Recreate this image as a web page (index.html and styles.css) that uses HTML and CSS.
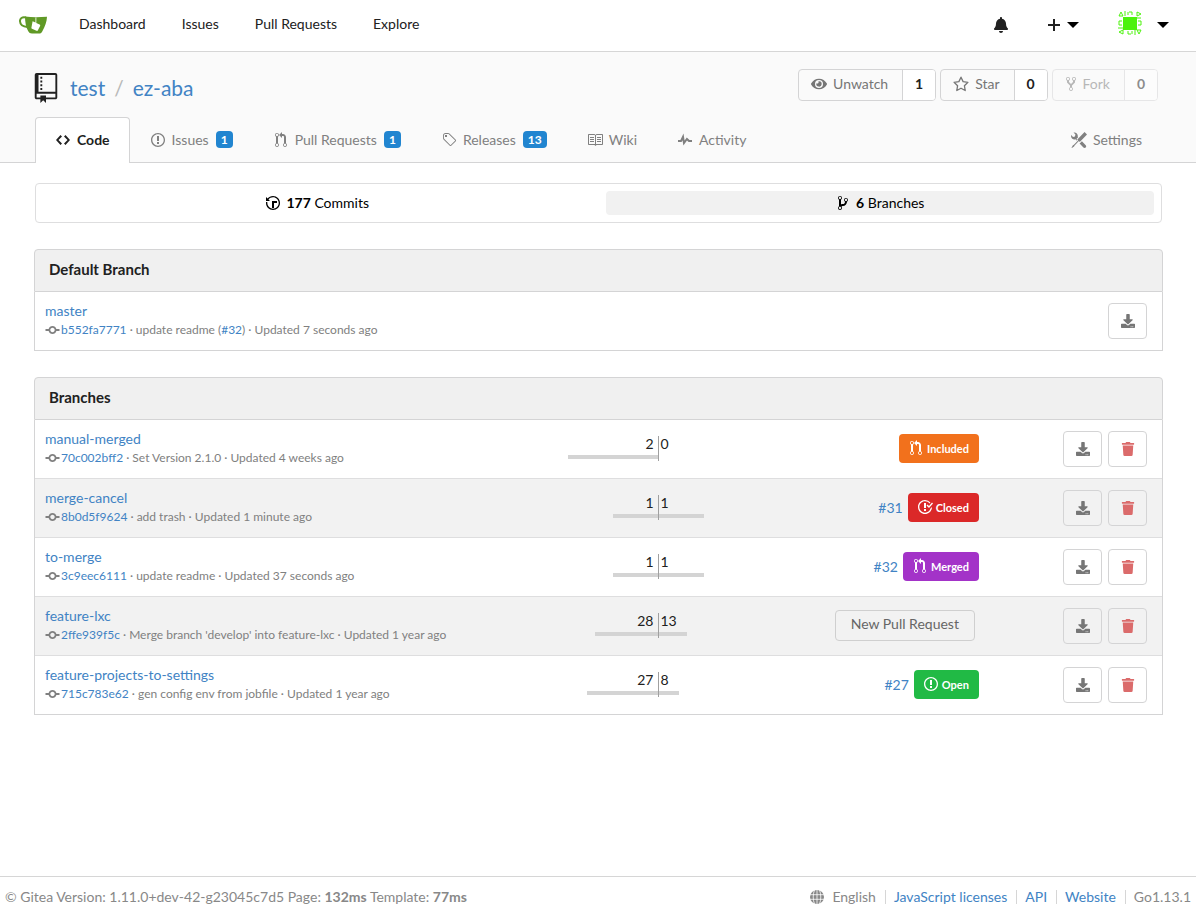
FILE: index.html
```html
<!DOCTYPE html>
<html lang="en">
<head>
  <meta charset="UTF-8">
  <title>test/ez-aba: Branches</title>
  <link rel="stylesheet" href="styles.css">
</head>
<body>

<!-- icon sprite -->
<svg class="sprite" aria-hidden="true">
  <symbol id="i-repo" viewBox="0 0 12 16"><path d="M4 9H3V8h1v1zm0-3H3v1h1V6zm0-2H3v1h1V4zm0-2H3v1h1V2zm8-1v12c0 .55-.45 1-1 1H6v2l-1.5-1.5L3 16v-2H1c-.55 0-1-.45-1-1V1c0-.55.45-1 1-1h10c.55 0 1 .45 1 1zm-1 10H1v2h2v-1h3v1h5v-2zm0-10H2v9h9V1z"/></symbol>
  <symbol id="i-code" viewBox="0 0 14 16"><path d="M9.5 3L8 4.5 11.5 8 8 11.5 9.5 13 14 8 9.5 3zm-5 0L0 8l4.5 5L6 11.5 2.5 8 6 4.5 4.5 3z"/></symbol>
  <symbol id="i-issue" viewBox="0 0 14 16"><path d="M7 2.3c3.14 0 5.7 2.56 5.7 5.7s-2.56 5.7-5.7 5.7A5.71 5.71 0 0 1 1.3 8c0-3.14 2.56-5.7 5.7-5.7zM7 1C3.14 1 0 4.14 0 8s3.14 7 7 7 7-3.14 7-7-3.14-7-7-7zm1 3H6v5h2V4zm0 6H6v2h2v-2z"/></symbol>
  <symbol id="i-closed" viewBox="0 0 16 16"><path d="M7 10h2v2H7v-2zm2-6H7v5h2V4zm1.5 1.5l-1 1L12 9l4-4.5-1-1L12 7l-1.5-1.5zM8 13.7A5.71 5.71 0 0 1 2.3 8c0-3.14 2.56-5.7 5.7-5.7 1.83 0 3.45.88 4.5 2.2l.92-.92A6.947 6.947 0 0 0 8 1C4.14 1 1 4.14 1 8s3.14 7 7 7 7-3.14 7-7l-1.52 1.52c-.66 2.41-2.86 4.19-5.48 4.19v-.01z"/></symbol>
  <symbol id="i-pull" viewBox="0 0 12 16"><path d="M11 11.28V5c-.03-.78-.34-1.47-.94-2.06C9.46 2.35 8.78 2.03 8 2H7V0L4 3l3 3V4h1c.27.02.48.11.69.31.21.2.3.42.31.69v6.28A1.993 1.993 0 0 0 10 15a1.993 1.993 0 0 0 1-3.72zm-1 2.92c-.66 0-1.2-.55-1.2-1.2 0-.65.55-1.2 1.2-1.2.65 0 1.2.55 1.2 1.2 0 .65-.55 1.2-1.2 1.2zM4 3c0-1.11-.89-2-2-2a1.993 1.993 0 0 0-1 3.72v6.56A1.993 1.993 0 0 0 2 15a1.993 1.993 0 0 0 1-3.72V4.72c.59-.34 1-.98 1-1.72zm-.8 10c0 .66-.55 1.2-1.2 1.2-.65 0-1.2-.55-1.2-1.2 0-.65.55-1.2 1.2-1.2.65 0 1.2.55 1.2 1.2zM2 4.2C1.34 4.2.8 3.65.8 3c0-.65.55-1.2 1.2-1.2.65 0 1.2.55 1.2 1.2 0 .65-.55 1.2-1.2 1.2z"/></symbol>
  <symbol id="i-tag" viewBox="0 0 14 16"><path d="M7.73 1.73C7.26 1.26 6.62 1 5.96 1H3.5C2.13 1 1 2.13 1 3.5v2.47c0 .66.27 1.3.73 1.77l6.06 6.06c.39.39 1.02.39 1.41 0l4.59-4.59a.996.996 0 0 0 0-1.41L7.73 1.73zM2.38 7.09c-.31-.3-.47-.7-.47-1.13V3.5c0-.88.72-1.59 1.59-1.59h2.47c.42 0 .83.16 1.13.47l6.14 6.13-4.73 4.73-6.13-6.15zM3.01 3h2v2H3V3h.01z"/></symbol>
  <symbol id="i-book" viewBox="0 0 16 16"><path d="M3 5h4v1H3V5zm0 3h4V7H3v1zm0 2h4V9H3v1zm11-5h-4v1h4V5zm0 2h-4v1h4V7zm0 2h-4v1h4V9zm2-6v9c0 .55-.45 1-1 1H9.5l-1 1-1-1H2c-.55 0-1-.45-1-1V3c0-.55.45-1 1-1h5.5l1 1 1-1H15c.55 0 1 .45 1 1zm-8 .5L7.5 3H2v9h6V3.5zm7-.5H9.5l-.5.5V12h6V3z"/></symbol>
  <symbol id="i-pulse" viewBox="0 0 14 16"><path d="M11.5 8L8.8 5.4 6.6 8.5 5.5 1.6 2.38 8H0v2h3.6l.9-1.8.9 5.4L9 8.5l1.6 1.5H14V8h-2.5z"/></symbol>
  <symbol id="i-tools" viewBox="0 0 16 16"><path d="M4.48 7.27c.26.26 1.28 1.33 1.28 1.33l.56-.58-.88-.91 1.69-1.8s-.76-.74-.43-.45c.32-1.19.03-2.51-.87-3.44C4.93.5 3.66.2 2.52.51l1.93 2-.51 1.96-1.89.52-1.93-1.99C-.19 4.17.1 5.48 1 6.4c.94.98 2.29 1.26 3.48.87zm6.44 1.94l-2.33 2.3 3.84 3.98c.31.33.73.49 1.14.49.41 0 .82-.16 1.14-.49.63-.65.63-1.7 0-2.35l-3.79-3.93zM16 2.53L13.55 0 6.33 7.46l.88.91-4.31 4.46-.99.53-1.39 2.27.35.37 2.2-1.44.51-1.02L7.9 9.08l.88.91L16 2.53z"/></symbol>
  <symbol id="i-history" viewBox="0 0 14 16"><path d="M8 13H6V6h5v2H8v5zM7 1C4.81 1 2.87 2.02 1.59 3.59L0 2v4h4L2.5 4.5C3.55 3.17 5.17 2.3 7 2.3c3.14 0 5.7 2.56 5.7 5.7s-2.56 5.7-5.7 5.7A5.71 5.71 0 0 1 1.3 8c0-.34.03-.67.09-1H.08C.03 7.33 0 7.66 0 8c0 3.86 3.14 7 7 7s7-3.14 7-7-3.14-7-7-7z"/></symbol>
  <symbol id="i-branch" viewBox="0 0 10 16"><path d="M10 5c0-1.11-.89-2-2-2a1.993 1.993 0 0 0-1 3.72v.3c-.02.52-.23.98-.63 1.38-.4.4-.86.61-1.38.63-.83.02-1.48.16-2 .45V4.72a1.993 1.993 0 0 0-1-3.72C.88 1 0 1.89 0 3a2 2 0 0 0 1 1.72v6.56c-.59.35-1 .99-1 1.72 0 1.11.89 2 2 2 1.11 0 2-.89 2-2 0-.53-.2-1-.53-1.36.09-.06.48-.41.59-.47.25-.11.56-.17.94-.17 1.05-.05 1.95-.45 2.75-1.25S8.95 7.77 9 6.73h-.02C9.59 6.37 10 5.73 10 5zM2 1.8c.66 0 1.2.55 1.2 1.2 0 .65-.55 1.2-1.2 1.2C1.35 4.2.8 3.65.8 3c0-.65.55-1.2 1.2-1.2zm0 12.41c-.66 0-1.2-.55-1.2-1.2 0-.65.55-1.2 1.2-1.2.65 0 1.2.55 1.2 1.2 0 .65-.55 1.2-1.2 1.2zm6-8c-.66 0-1.2-.55-1.2-1.2 0-.65.55-1.2 1.2-1.2.65 0 1.2.55 1.2 1.2 0 .65-.55 1.2-1.2 1.2z"/></symbol>
  <symbol id="i-commit" viewBox="0 0 14 16"><path d="M10.86 7c-.45-1.72-2-3-3.86-3-1.86 0-3.41 1.28-3.86 3H0v2h3.14c.45 1.72 2 3 3.86 3 1.86 0 3.41-1.28 3.86-3H14V7h-3.14zM7 10.2c-1.22 0-2.2-.98-2.2-2.2 0-1.22.98-2.2 2.2-2.2 1.22 0 2.2.98 2.2 2.2 0 1.22-.98 2.2-2.2 2.2z"/></symbol>
  <symbol id="i-fork" viewBox="0 0 10 16"><path d="M8 1a1.993 1.993 0 0 0-1 3.72V6L5 8 3 6V4.72A1.993 1.993 0 0 0 2 1a1.993 1.993 0 0 0-1 3.72V6.5l3 3v1.78A1.993 1.993 0 0 0 5 15a1.993 1.993 0 0 0 1-3.72V9.5l3-3V4.72A1.993 1.993 0 0 0 8 1zM2 4.2C1.34 4.2.8 3.65.8 3c0-.65.55-1.2 1.2-1.2.65 0 1.2.55 1.2 1.2 0 .65-.55 1.2-1.2 1.2zm3 10c-.66 0-1.2-.55-1.2-1.2 0-.65.55-1.2 1.2-1.2.65 0 1.2.55 1.2 1.2 0 .65-.55 1.2-1.2 1.2zm3-10c-.66 0-1.2-.55-1.2-1.2 0-.65.55-1.2 1.2-1.2.65 0 1.2.55 1.2 1.2 0 .65-.55 1.2-1.2 1.2z"/></symbol>
  <symbol id="i-bell" viewBox="0 0 448 512"><path d="M224 512c35.32 0 63.97-28.65 63.97-64H160.03c0 35.35 28.65 64 63.97 64zm215.39-149.71c-19.32-20.76-55.47-51.99-55.47-154.29 0-77.7-54.48-139.9-127.94-155.16V32c0-17.67-14.32-32-31.98-32s-31.98 14.33-31.98 32v20.84C118.56 68.1 64.08 130.3 64.08 208c0 102.3-36.15 133.53-55.47 154.29-6 6.45-8.66 14.16-8.61 21.71.11 16.4 12.98 32 32.1 32h383.8c19.12 0 32-15.6 32.1-32 .05-7.55-2.61-15.27-8.61-21.71z"/></symbol>
  <symbol id="i-plus" viewBox="0 0 12 16"><path d="M12 9H7v5H5V9H0V7h5V2h2v5h5z"/></symbol>
  <symbol id="i-caret" viewBox="0 0 12 6"><path d="M0 0h12L6 6z"/></symbol>
  <symbol id="i-eye" viewBox="0 0 576 512"><path d="M572.52 241.4C518.29 135.59 410.93 64 288 64S57.68 135.64 3.48 241.41a32.35 32.35 0 0 0 0 29.19C57.71 376.41 165.07 448 288 448s230.32-71.64 284.52-177.41a32.35 32.35 0 0 0 0-29.19zM288 400a144 144 0 1 1 144-144 143.93 143.93 0 0 1-144 144zm0-240a95.31 95.31 0 0 0-25.31 3.79 47.85 47.85 0 0 1-66.9 66.9A95.78 95.78 0 1 0 288 160z"/></symbol>
  <symbol id="i-star" viewBox="0 0 16 16"><path d="M8 1.2l2.1 4.4 4.8.7-3.5 3.4.8 4.8L8 12.2l-4.2 2.3.8-4.8L1.1 6.3l4.8-.7z" fill="none" stroke="currentColor" stroke-width="1.3" stroke-linejoin="round"/></symbol>
  <symbol id="i-trash" viewBox="0 0 448 512"><path d="M432 32H312l-9.4-18.7A24 24 0 0 0 281.1 0H166.8a23.72 23.72 0 0 0-21.4 13.3L136 32H16A16 16 0 0 0 0 48v32a16 16 0 0 0 16 16h416a16 16 0 0 0 16-16V48a16 16 0 0 0-16-16zM53.2 467a48 48 0 0 0 47.9 45h245.8a48 48 0 0 0 47.9-45L416 128H32z"/></symbol>
  <symbol id="i-download" viewBox="0 0 512 512"><path d="M216 0h80c13.3 0 24 10.7 24 24v168h87.7c17.8 0 26.7 21.5 14.1 34.1L269.7 378.3c-7.5 7.5-19.8 7.5-27.3 0L90.1 226.1c-12.6-12.6-3.7-34.1 14.1-34.1H192V24c0-13.3 10.7-24 24-24zm296 376v112c0 13.3-10.7 24-24 24H24c-13.3 0-24-10.7-24-24V376c0-13.3 10.7-24 24-24h146.7l49 49c20.1 20.1 52.5 20.1 72.6 0l49-49H488c13.3 0 24 10.7 24 24zm-124 88c0-11-9-20-20-20s-20 9-20 20 9 20 20 20 20-9 20-20zm64 0c0-11-9-20-20-20s-20 9-20 20 9 20 20 20 20-9 20-20z"/></symbol>
  <symbol id="i-globe" viewBox="0 0 14 14"><circle cx="7" cy="7" r="7"/><path d="M0 4.7h14M0 9.3h14M7 0v14M4.5 0C2.8 4 2.8 10 4.5 14M9.5 0c1.7 4 1.7 10 0 14" fill="none" stroke="#fff" stroke-width=".8"/></symbol>
</svg>

<nav class="navbar">
  <a href="#" class="logo" aria-label="Gitea">
    <svg width="28" height="18" viewBox="0 0 28 18">
      <path d="M7 1.5C3 .5.8 2.500 1 5.300c.2 3.700 3.500 5.500 7.500 5.700" fill="none" stroke="#609926" stroke-width="2"/>
      <path d="M6 .6c7 .7 14 .7 22 .1-.2 5-2 9.800-4.500 14.300-1 1.900-1.700 2.500-3.500 2.500h-7c-1.900 0-3-.8-3.900-2.500C7 11.500 6 6 6 .6z" fill="#609926"/>
      <path d="M13.600 5.300l2.900 1.300V1.500h.8v5.500l3.300 1.500c.6.3.8.8.5 1.400l-2.200 4.400c-.3.6-.8.8-1.400.5l-4.500-2.100c-.6-.3-.8-.8-.5-1.400z" fill="#fff"/>
    </svg>
  </a>
  <a href="#">Dashboard</a>
  <a href="#">Issues</a>
  <a href="#">Pull Requests</a>
  <a href="#">Explore</a>
  <div class="nav-right">
    <a href="#" aria-label="Notifications"><svg class="icon bell"><use href="#i-bell"/></svg></a>
    <button class="nav-menu" aria-label="Create"><svg class="icon plus"><use href="#i-plus"/></svg><svg class="caret"><use href="#i-caret"/></svg></button>
    <button class="nav-menu profile" aria-label="Profile">
      <svg class="avatar" viewBox="0 0 24 24" fill="none" stroke="#4cf20d">
        <path d="M5 6h14v13H5z" fill="#4cf20d" stroke="none"/>
        <path d="M1 5l2-4 2 4zM7 0v5M11 1h3v3M10 4V1M19 1l4 2-4 2zM23 7h-4M23 10v4h-3M20 10h3M23 19l-2 4-2-4zM17 19v5M13 23h-3v-3M14 20v3M5 23l-4-2 4-2zM0 17h5M1 14v-4h3M4 14H1"/>
      </svg>
      <svg class="caret"><use href="#i-caret"/></svg>
    </button>
  </div>
</nav>

<header class="repo-header">
  <div class="container">
    <div class="repo-top">
      <h1 class="repo-title">
        <svg class="repo-icon"><use href="#i-repo"/></svg>
        <a href="#">test</a><span class="divider">/</span><a href="#">ez-aba</a>
      </h1>
      <div class="repo-buttons">
        <div class="labeled"><button><svg class="icon"><use href="#i-eye"/></svg>Unwatch</button><a href="#">1</a></div>
        <div class="labeled"><button><svg class="icon"><use href="#i-star"/></svg>Star</button><a href="#">0</a></div>
        <div class="labeled disabled"><button disabled><svg class="icon narrow"><use href="#i-fork"/></svg>Fork</button><a href="#">0</a></div>
      </div>
    </div>
    <div class="tabs">
      <a href="#" class="tab active"><svg class="icon"><use href="#i-code"/></svg>Code</a>
      <a href="#" class="tab"><svg class="icon"><use href="#i-issue"/></svg>Issues <span class="count">1</span></a>
      <a href="#" class="tab"><svg class="icon"><use href="#i-pull"/></svg>Pull Requests <span class="count">1</span></a>
      <a href="#" class="tab"><svg class="icon"><use href="#i-tag"/></svg>Releases <span class="count">13</span></a>
      <a href="#" class="tab"><svg class="icon"><use href="#i-book"/></svg>Wiki</a>
      <a href="#" class="tab"><svg class="icon"><use href="#i-pulse"/></svg>Activity</a>
      <a href="#" class="tab settings"><svg class="icon"><use href="#i-tools"/></svg>Settings</a>
    </div>
  </div>
</header>

<main class="container content">
  <div class="stats">
    <a href="#"><svg class="icon"><use href="#i-history"/></svg><span><b>177</b> Commits</span></a>
    <a href="#" class="active"><svg class="icon"><use href="#i-branch"/></svg><span><b>6</b> Branches</span></a>
  </div>

  <section class="panel">
    <h4>Default Branch</h4>
    <table>
      <tr>
        <td>
          <a href="#">master</a>
          <p><svg class="commit"><use href="#i-commit"/></svg><a href="#">b552fa7771</a> · update readme (<a href="#">#32</a>) · Updated 7 seconds ago</p>
        </td>
        <td class="actions"><button aria-label="Download"><svg class="icon"><use href="#i-download"/></svg></button></td>
      </tr>
    </table>
  </section>

  <section class="panel">
    <h4>Branches</h4>
    <table>
      <tr>
        <td>
          <a href="#">manual-merged</a>
          <p><svg class="commit"><use href="#i-commit"/></svg><a href="#">70c002bff2</a> · Set Version 2.1.0 · Updated 4 weeks ago</p>
        </td>
        <td class="diverge">
          <div class="divergence">
            <div class="behind"><span>2</span><span class="bar" style="width: 100%"></span></div>
            <div class="ahead"><span>0</span><span class="bar" style="width: 0%"></span></div>
          </div>
        </td>
        <td class="pr"><a href="#" class="label orange"><svg class="icon"><use href="#i-pull"/></svg>Included</a></td>
        <td class="actions">
          <button aria-label="Download"><svg class="icon"><use href="#i-download"/></svg></button>
          <button class="delete" aria-label="Delete"><svg class="icon"><use href="#i-trash"/></svg></button>
        </td>
      </tr>
      <tr>
        <td>
          <a href="#">merge-cancel</a>
          <p><svg class="commit"><use href="#i-commit"/></svg><a href="#">8b0d5f9624</a> · add trash · Updated 1 minute ago</p>
        </td>
        <td class="diverge">
          <div class="divergence">
            <div class="behind"><span>1</span><span class="bar" style="width: 50%"></span></div>
            <div class="ahead"><span>1</span><span class="bar" style="width: 50%"></span></div>
          </div>
        </td>
        <td class="pr"><a href="#">#31</a><a href="#" class="label red"><svg class="icon"><use href="#i-closed"/></svg>Closed</a></td>
        <td class="actions">
          <button aria-label="Download"><svg class="icon"><use href="#i-download"/></svg></button>
          <button class="delete" aria-label="Delete"><svg class="icon"><use href="#i-trash"/></svg></button>
        </td>
      </tr>
      <tr>
        <td>
          <a href="#">to-merge</a>
          <p><svg class="commit"><use href="#i-commit"/></svg><a href="#">3c9eec6111</a> · update readme · Updated 37 seconds ago</p>
        </td>
        <td class="diverge">
          <div class="divergence">
            <div class="behind"><span>1</span><span class="bar" style="width: 50%"></span></div>
            <div class="ahead"><span>1</span><span class="bar" style="width: 50%"></span></div>
          </div>
        </td>
        <td class="pr"><a href="#">#32</a><a href="#" class="label purple"><svg class="icon"><use href="#i-pull"/></svg>Merged</a></td>
        <td class="actions">
          <button aria-label="Download"><svg class="icon"><use href="#i-download"/></svg></button>
          <button class="delete" aria-label="Delete"><svg class="icon"><use href="#i-trash"/></svg></button>
        </td>
      </tr>
      <tr>
        <td>
          <a href="#">feature-lxc</a>
          <p><svg class="commit"><use href="#i-commit"/></svg><a href="#">2ffe939f5c</a> · Merge branch 'develop' into feature-lxc · Updated 1 year ago</p>
        </td>
        <td class="diverge">
          <div class="divergence">
            <div class="behind"><span>28</span><span class="bar" style="width: 69%"></span></div>
            <div class="ahead"><span>13</span><span class="bar" style="width: 32%"></span></div>
          </div>
        </td>
        <td class="pr"><button class="new-pr">New Pull Request</button></td>
        <td class="actions">
          <button aria-label="Download"><svg class="icon"><use href="#i-download"/></svg></button>
          <button class="delete" aria-label="Delete"><svg class="icon"><use href="#i-trash"/></svg></button>
        </td>
      </tr>
      <tr>
        <td>
          <a href="#">feature-projects-to-settings</a>
          <p><svg class="commit"><use href="#i-commit"/></svg><a href="#">715c783e62</a> · gen config env from jobfile · Updated 1 year ago</p>
        </td>
        <td class="diverge">
          <div class="divergence">
            <div class="behind"><span>27</span><span class="bar" style="width: 78%"></span></div>
            <div class="ahead"><span>8</span><span class="bar" style="width: 23%"></span></div>
          </div>
        </td>
        <td class="pr"><a href="#">#27</a><a href="#" class="label green"><svg class="icon"><use href="#i-issue"/></svg>Open</a></td>
        <td class="actions">
          <button aria-label="Download"><svg class="icon"><use href="#i-download"/></svg></button>
          <button class="delete" aria-label="Delete"><svg class="icon"><use href="#i-trash"/></svg></button>
        </td>
      </tr>
    </table>
  </section>
</main>

<footer>
  <div>© Gitea Version: 1.11.0+dev-42-g23045c7d5 Page: <b>132ms</b> Template: <b>77ms</b></div>
  <div class="links">
    <button><svg class="icon"><use href="#i-globe"/></svg>English</button>
    <a href="#">JavaScript licenses</a>
    <a href="#">API</a>
    <a href="#">Website</a>
    <span>Go1.13.1</span>
  </div>
</footer>

</body>
</html>
```

FILE: styles.css
```css
* {
  box-sizing: border-box;
}

body {
  margin: 0;
  min-height: 100vh;
  display: flex;
  flex-direction: column;
  font-family: Lato, "Liberation Sans", sans-serif;
  font-size: 14px;
  line-height: 20px;
  color: #212121;
  background: #fff;
}

a {
  color: #4183c4;
  text-decoration: none;
}

button {
  font: inherit;
  color: inherit;
  background: none;
  border: 0;
  padding: 0;
  cursor: pointer;
}

.sprite {
  display: none;
}

.icon {
  width: 16px;
  height: 16px;
  fill: currentColor;
  flex-shrink: 0;
}

.container {
  width: 100%;
  padding: 0 33px 0 34px;
}

/* top bar */
.navbar {
  display: flex;
  align-items: center;
  gap: 36px;
  height: 52px;
  padding: 0 27px 2px 19px;
  border-bottom: 1px solid #d6d6d6;
}

.navbar > a {
  padding-bottom: 2px;
}

.navbar a {
  color: #212121;
}

.navbar .logo {
  display: flex;
  margin-right: -4px;
  padding: 0;
}

.nav-right {
  display: flex;
  align-items: center;
  gap: 39px;
  margin-left: auto;
}

.nav-right a,
.nav-menu {
  display: flex;
  align-items: center;
}

.nav-menu {
  gap: 7px;
}

.nav-menu.profile {
  gap: 15px;
}

.plus {
  width: 12px;
}

.caret {
  width: 12px;
  height: 6px;
}

.avatar {
  width: 24px;
  height: 24px;
  margin-bottom: 3px;
}

/* repo header */
.repo-header {
  background: #fafafa;
  border-bottom: 1px solid #d4d4d5;
}

.repo-top {
  display: flex;
  justify-content: space-between;
  align-items: flex-start;
  height: 65px;
  padding-top: 17px;
}

.repo-title {
  display: flex;
  align-items: center;
  margin: 3px 0 0;
  font-size: 21px;
  line-height: 32px;
  font-weight: 400;
}

.repo-icon {
  width: 24px;
  height: 30px;
  margin-right: 12px;
  fill: #212121;
}

.divider {
  margin: 0 9px;
  color: #b8b8b8;
}

.repo-buttons {
  display: flex;
  gap: 4px;
  margin-right: 5px;
}

.labeled {
  display: flex;
  height: 32px;
  border: 1px solid #d4d4d5;
  border-radius: 4px;
  overflow: hidden;
}

.labeled button {
  display: flex;
  align-items: center;
  gap: 6px;
  padding: 0 14px 2px 12px;
  color: #767676;
}

.labeled a {
  width: 33px;
  padding-top: 4px;
  border-left: 1px solid #d4d4d5;
  background: #fff;
  color: #212121;
  font-weight: 700;
  text-align: center;
}

.labeled.disabled {
  opacity: 0.5;
}

.narrow {
  width: 12px;
}

.tabs {
  display: flex;
  margin: 0 1px -1px;
}

.tab {
  display: flex;
  align-items: center;
  height: 46px;
  padding: 0 19px 2px;
  border: 1px solid transparent;
  border-bottom: 0;
  color: #808080;
}

.tab .icon {
  margin-right: 6px;
}

.tab.active {
  background: #fff;
  border-color: #d4d4d5;
  border-radius: 4px 4px 0 0;
  color: #212121;
  font-weight: 700;
}

.tab.settings {
  margin-left: auto;
}

.count {
  min-width: 17px;
  margin-left: 7px;
  padding: 0 5px;
  border-radius: 4px;
  background: #2185d0;
  color: #fff;
  font-size: 12px;
  line-height: 17px;
  font-weight: 700;
  text-align: center;
}

/* content */
.content {
  flex: 1;
  padding-top: 20px;
}

.stats {
  display: flex;
  gap: 14px;
  height: 40px;
  margin: 0 1px 26px;
  padding: 7px;
  border: 1px solid #dededf;
  border-radius: 4px;
}

.stats a {
  display: flex;
  flex: 1;
  align-items: center;
  justify-content: center;
  gap: 5px;
  color: #000;
}

.stats a.active {
  background: #f1f1f1;
  border-radius: 4px;
}

.panel {
  margin-bottom: 26px;
}

.panel h4 {
  height: 43px;
  margin: 0;
  padding: 9px 14px;
  border: 1px solid #d4d4d5;
  border-radius: 4px 4px 0 0;
  background: #f0f0f0;
  font-size: 15px;
}

table {
  width: 100%;
  table-layout: fixed;
  border-collapse: separate;
  border-spacing: 0;
  border: 1px solid #d4d4d5;
  border-top: 0;
}

td {
  height: 58px;
  padding: 0 10px 2px;
}

tr + tr td {
  height: 59px;
  border-top: 1px solid #dededf;
}

tr:nth-child(even) {
  background: #f2f2f2;
}

td p {
  display: flex;
  align-items: center;
  margin: 0;
  font-size: 12px;
  line-height: 18px;
  color: #808080;
  white-space: pre;
}

.commit {
  width: 16px;
  height: 16px;
  padding-right: 1px;
  fill: currentColor;
}

td.diverge {
  width: 19%;
  padding-right: 15px;
}

.divergence {
  display: flex;
  width: 181px;
  margin: 0 auto;
}

.behind,
.ahead {
  display: flex;
  flex-direction: column;
  width: 90px;
  height: 25px;
  padding-bottom: 2px;
  line-height: 16px;
}

.behind {
  align-items: flex-end;
}

.behind span:first-child {
  margin-right: 4px;
}

.ahead {
  width: 91px;
  border-left: 1px solid #a0a0a0;
}

.ahead span:first-child {
  margin-left: 2px;
}

.bar {
  height: 4px;
  margin-top: auto;
  background: #d4d4d4;
}

td.pr {
  width: 20%;
  padding-right: 14px;
  text-align: right;
}

.pr a {
  vertical-align: middle;
}

.pr .label {
  display: inline-flex;
  align-items: center;
  gap: 3px;
  height: 29px;
  margin-left: 5px;
  padding: 2px 10px 0 9px;
  border-radius: 4px;
  color: #fff;
  font-size: 11px;
  font-weight: 700;
}

.label .icon {
  margin-bottom: 3px;
}

.orange { background: #f2711c; }
.red { background: #db2828; }
.purple { background: #a333c8; }
.green { background: #21ba45; }

.new-pr {
  height: 31px;
  margin-right: 4px;
  padding: 0 15px 3px;
  border: 1px solid #cfcfcf;
  border-radius: 4px;
  color: #666;
}

td.actions {
  width: 15%;
  padding: 0 15px 0 0;
  text-align: right;
  font-size: 0;
}

.actions button {
  display: inline-flex;
  align-items: center;
  justify-content: center;
  width: 39px;
  height: 36px;
  margin-left: 6px;
  border: 1px solid #d4d4d5;
  border-radius: 4px;
  color: #767676;
}

.actions .icon {
  width: 14px;
  height: 14px;
}

.actions .delete {
  color: #db6b6b;
}

/* footer */
footer {
  display: flex;
  justify-content: space-between;
  align-items: center;
  height: 40px;
  padding: 0 5px;
  border-top: 1px solid #d6d6d6;
  color: #888;
}

.links {
  display: flex;
  align-items: center;
}

.links button {
  display: flex;
  align-items: center;
}

.links .icon {
  width: 14px;
  height: 14px;
  margin-right: 8px;
}

.links a,
.links span {
  margin-left: 9px;
  padding-left: 8px;
  border-left: 1px solid #d6d6d6;
  line-height: 14px;
}
```
